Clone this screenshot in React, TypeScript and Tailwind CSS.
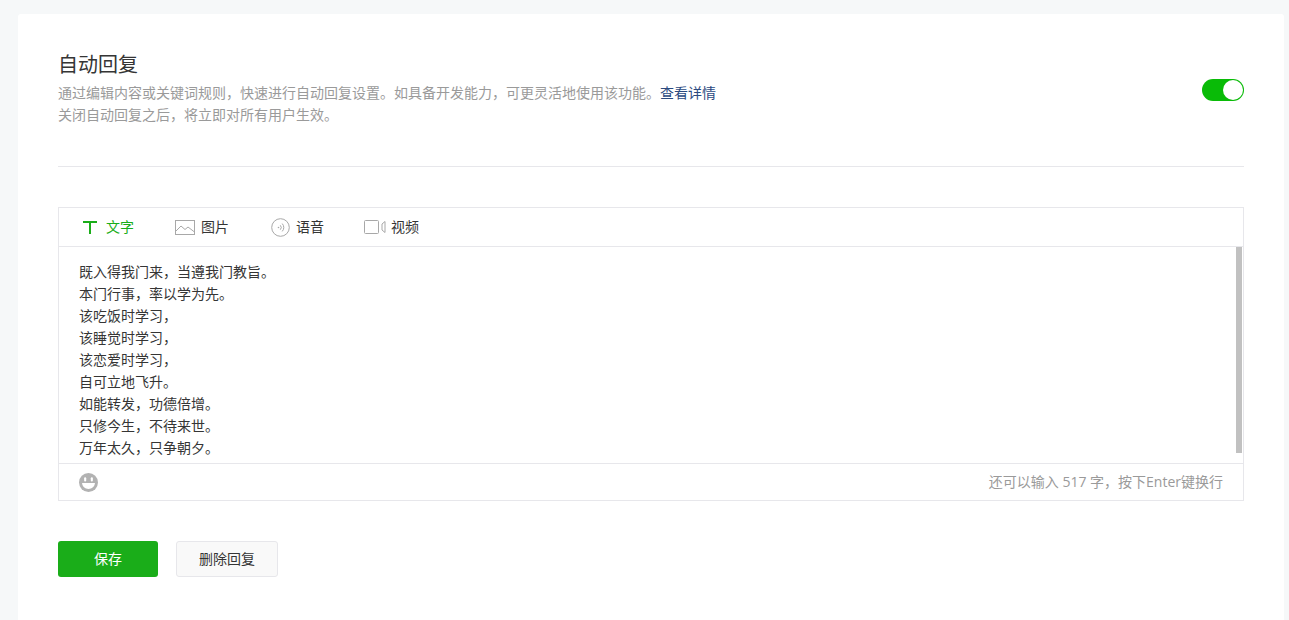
const font = { fontFamily: '"Noto Sans CJK SC", "Liberation Sans", sans-serif' };

const lines = [
  "既入得我门来，当遵我门教旨。",
  "本门行事，率以学为先。",
  "该吃饭时学习，",
  "该睡觉时学习，",
  "该恋爱时学习，",
  "自可立地飞升。",
  "如能转发，功德倍增。",
  "只修今生，不待来世。",
  "万年太久，只争朝夕。",
];

function TextIcon() {
  return (
    <svg width="14" height="13" viewBox="0 0 14 13" className="mt-[1px] block shrink-0">
      <path d="M0 0h14v2H8v11H6V2H0z" fill="#1aad19" />
    </svg>
  );
}
function ImageIcon() {
  return (
    <svg width="20" height="15" viewBox="0 0 20 15" fill="none" stroke="#a8a8a8" className="block shrink-0">
      <rect x="0.5" y="0.5" width="19" height="14" />
      <path d="M0.5 11.5 L6 6 L10 9.5 L13 7 L19.5 12" />
    </svg>
  );
}
function VoiceIcon() {
  return (
    <svg width="19" height="19" viewBox="0 0 19 19" fill="none" stroke="#a8a8a8" className="block shrink-0">
      <circle cx="9.5" cy="9.5" r="8.8" />
      <circle cx="7.5" cy="9.5" r="0.8" fill="#a8a8a8" stroke="none" />
      <path d="M9.3 7.3a3.2 3.2 0 0 1 0 4.4" />
      <path d="M11.2 5.6a5.6 5.6 0 0 1 0 7.8" />
    </svg>
  );
}
function VideoIcon() {
  return (
    <svg width="22" height="14" viewBox="0 0 22 14" fill="none" stroke="#a8a8a8" className="block shrink-0">
      <rect x="0.5" y="0.5" width="14" height="13" rx="1" />
      <path d="M21 1.5 L18 4 V10 L21 12.5 Z" />
    </svg>
  );
}
function SmileIcon() {
  return (
    <svg width="19" height="19" viewBox="0 0 20 20" className="block">
      <circle cx="10" cy="10" r="10" fill="#b2b2b2" />
      <rect x="5.4" y="4.4" width="2.2" height="4.6" rx="1.1" fill="#fff" />
      <rect x="12.4" y="4.4" width="2.2" height="4.6" rx="1.1" fill="#fff" />
      <path d="M3.2 10.6h13.6c-.3 3.8-3.2 6.2-6.8 6.2s-6.5-2.4-6.8-6.2z" fill="#fff" />
    </svg>
  );
}

function Tab({ icon, label, active, gap, width }: { icon: React.ReactNode; label: string; active?: boolean; gap: string; width: string }) {
  return (
    <div className={`flex items-center ${gap} ${width}`}>
      {icon}
      <span className={`pb-[2px] text-[14px] ${active ? "text-[#1aad19]" : "text-[#353535]"}`}>{label}</span>
    </div>
  );
}

export default function App() {
  return (
    <div className="h-[620px] overflow-hidden bg-[#f6f8f9] pt-[14px] pl-[18px] pr-[5px]" style={font}>
      <div className="h-[640px] rounded-[3px] bg-white px-[40px] pt-[36px]">
        <div className="flex h-[117px] items-start justify-between border-b border-[#e7e7eb]">
          <div>
            <h2 className="text-[20px] leading-[28px] font-normal text-[#353535]">自动回复</h2>
            <p className="mt-[3px] text-[14px] leading-[22px] text-[#9a9a9a]">
              通过编辑内容或关键词规则，快速进行自动回复设置。如具备开发能力，可更灵活地使用该功能。
              <span className="text-[#2b4a7f]">查看详情</span>
            </p>
            <p className="text-[14px] leading-[22px] text-[#9a9a9a]">关闭自动回复之后，将立即对所有用户生效。</p>
          </div>
          <div className="mt-[29px] flex h-[22px] w-[42px] items-center justify-end rounded-full bg-[#09bb07] pr-[1px]">
            <div className="h-[20px] w-[20px] rounded-full bg-white" />
          </div>
        </div>

        <div className="mt-[40px] border border-[#e7e7eb]">
          <div className="flex h-[39px] items-center border-b border-[#e7e7eb] pl-[24px]">
            <Tab icon={<TextIcon />} label="文字" active gap="gap-[9px]" width="w-[92px]" />
            <Tab icon={<ImageIcon />} label="图片" gap="gap-[6px]" width="w-[96px]" />
            <Tab icon={<VoiceIcon />} label="语音" gap="gap-[6px]" width="w-[93px]" />
            <Tab icon={<VideoIcon />} label="视频" gap="gap-[5px]" width="w-[80px]" />
          </div>
          <div className="relative h-[216px] overflow-hidden px-[20px] pt-[13px] text-[14px] leading-[22px] text-[#353535]">
            {lines.map((l) => (
              <div key={l}>{l}</div>
            ))}
            <div className="absolute top-0 right-[1px] h-[206px] w-[6px] bg-[#c1c1c1]" />
          </div>
          <div className="flex h-[37px] items-center justify-between border-t border-[#e7e7eb] pl-[20px] pr-[20px]">
            <SmileIcon />
            <span className="pb-[2px] text-[14px] text-[#9a9a9a] [font-family:'Open_Sans','Noto_Sans_CJK_SC',sans-serif]">还可以输入 517 字，按下Enter键换行</span>
          </div>
        </div>

        <div className="mt-[40px] flex gap-[18px]">
          <button className="h-[36px] w-[100px] rounded-[3px] bg-[#1aad19] pb-[2px] text-[14px] text-white">保存</button>
          <button className="h-[36px] w-[102px] rounded-[3px] border border-[#e7e7eb] bg-[#f9f9f9] pb-[2px] text-[14px] text-[#353535]">删除回复</button>
        </div>
      </div>
    </div>
  );
}
